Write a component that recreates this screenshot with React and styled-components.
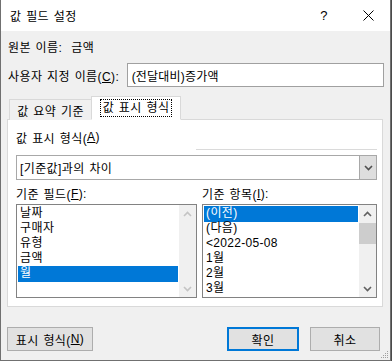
import React from 'react';
import styled, { createGlobalStyle } from 'styled-components';

const Global = createGlobalStyle`
  html, body { margin: 0; padding: 0; background: #4a4a4a; }
  body {
    font-family: "Liberation Sans", "Noto Sans CJK KR", sans-serif;
    font-size: 12px;
    letter-spacing: 0.4px;
    word-spacing: 1px;
    color: #000;
  }
  * { box-sizing: border-box; }
`;

const Window = styled.div`
  position: relative;
  width: 391px;
  height: 361px;
  background: #f0f0f0;
  border-left: 1px solid #707070;
  border-right: 1px solid #707070;
  border-bottom: 1px solid #707070;
  display: flex;
  flex-direction: column;
`;

const TitleBar = styled.div`
  height: 31px;
  background: #fff;
  display: flex;
  align-items: center;
  padding-left: 9px;
`;

const TitleText = styled.div`
  flex: 1;
`;

const TitleButton = styled.div`
  width: 44px;
  height: 31px;
  display: flex;
  align-items: center;
  justify-content: center;
  font-size: 13px;
`;

const Body = styled.div`
  flex: 1;
  padding: 0 6px;
  display: flex;
  flex-direction: column;
`;

const InfoRow = styled.div`
  height: 30px;
  display: flex;
  align-items: center;
  padding-left: 1px;
`;

const InfoValue = styled.span`
  margin-left: 9px;
`;

const NameRow = styled.div`
  margin-top: 2px;
  display: flex;
  align-items: center;
  padding-left: 1px;
`;

const NameLabel = styled.label`
  width: 119px;
`;

const TextInput = styled.div`
  width: 258px;
  height: 24px;
  background: #fff;
  border: 1px solid #a0a0a0;
  display: flex;
  align-items: center;
  padding-left: 4px;
  letter-spacing: 0.2px;
`;

const Mn = styled.span`
  text-decoration: underline;
  text-underline-offset: 1px;
`;

const TabStrip = styled.div`
  margin-top: 9px;
  height: 24px;
  display: flex;
  align-items: flex-end;
  padding-left: 2px;
  position: relative;
  z-index: 1;
`;

const Tab = styled.div`
  height: ${p => (p.$active ? '24px' : '21px')};
  width: ${p => p.$w}px;
  background: ${p => (p.$active ? '#fff' : '#f0f0f0')};
  border: 1px solid #d9d9d9;
  border-bottom: ${p => (p.$active ? '1px solid #fff' : 'none')};
  margin-left: ${p => (p.$active ? '-1px' : '0')};
  display: flex;
  align-items: center;
  justify-content: center;
  padding-top: ${p => (p.$active ? '0' : '1px')};
`;

const FocusBox = styled.span`
  border: 1px dotted #000;
  padding: 0 2px;
  line-height: 16px;
`;

const Panel = styled.div`
  margin-top: -1px;
  width: 376px;
  height: 188px;
  background: #fff;
  border: 1px solid #d9d9d9;
  padding: 0 5px 0 8px;
  display: flex;
  flex-direction: column;
`;

const SectionHead = styled.div`
  height: 30px;
  display: flex;
  align-items: center;
  position: relative;
  padding-top: 4px;
`;

const Rule = styled.div`
  position: absolute;
  left: 180px;
  right: 0;
  bottom: 0;
  height: 1px;
  background: #dadada;
`;

const Select = styled.div`
  margin-top: 5px;
  width: 361px;
  height: 25px;
  display: flex;
  border: 1px solid #a8a8a8;
  background: #fff;
`;

const SelectValue = styled.div`
  flex: 1;
  display: flex;
  align-items: center;
  padding-left: 3px;
`;

const SelectArrow = styled.div`
  width: 17px;
  background: #dedede;
  border-left: 1px solid #a8a8a8;
  display: flex;
  align-items: center;
  justify-content: center;
`;

const ListArea = styled.div`
  margin-top: 3px;
  display: grid;
  grid-template-columns: 181px 175px;
  column-gap: 5px;
`;

const ListCol = styled.div`
  display: flex;
  flex-direction: column;
`;

const ListLabel = styled.div`
  height: 21px;
  display: flex;
  align-items: center;
`;

const ListBox = styled.div`
  height: 94px;
  border: 1px solid #828282;
  background: #fff;
  display: flex;
  overflow: hidden;
`;

const Items = styled.div`
  flex: 1;
  padding: 1px 1px 0 1px;
`;

const Item = styled.div`
  height: ${p => (p.$sel ? '16px' : '15px')};
  margin-bottom: ${p => (p.$sel ? '-1px' : '0')};
  line-height: 15px;
  padding-left: 2px;
  white-space: nowrap;
  background: ${p => (p.$sel ? '#0078d7' : 'transparent')};
  color: ${p => (p.$sel ? '#fff' : '#000')};
  letter-spacing: ${p => (p.$latin ? '0.3px' : '0.4px')};
`;

const ScrollBar = styled.div`
  width: 17px;
  background: #f0f0f0;
  display: flex;
  flex-direction: column;
  align-items: stretch;
`;

const ScrollBtn = styled.div`
  height: 17px;
  display: flex;
  align-items: center;
  justify-content: center;
`;

const ScrollTrack = styled.div`
  flex: 1;
  padding: 1px 0;
`;

const Thumb = styled.div`
  height: 21px;
  background: #cdcdcd;
`;

const ButtonRow = styled.div`
  margin-top: 20px;
  display: flex;
  align-items: center;
`;

const Button = styled.div`
  height: 24px;
  width: ${p => p.$w}px;
  margin-left: ${p => p.$ml || 0}px;
  background: #e1e1e1;
  border: ${p => (p.$default ? '2px solid #0078d7' : '1px solid #adadad')};
  display: flex;
  align-items: center;
  justify-content: center;
`;

const Grip = styled.svg`
  position: absolute;
  right: 1px;
  bottom: 1px;
`;

const Chevron = ({ up, color = '#606060' }) => (
  <svg width="9" height="6" viewBox="0 0 9 6">
    <path
      d={up ? 'M1 5 L4.5 1.5 L8 5' : 'M1 1 L4.5 4.5 L8 1'}
      fill="none"
      stroke={color}
      strokeWidth="1.6"
    />
  </svg>
);

const List = ({ items, sel, disabled, thumb }) => (
  <ListBox>
    <Items>
      {items.map((t, i) => (
        <Item key={t} $sel={i === sel} $latin={/^[<0-9]/.test(t)}>{t}</Item>
      ))}
    </Items>
    <ScrollBar>
      <ScrollBtn><Chevron up color={disabled ? '#c4c4c4' : '#606060'} /></ScrollBtn>
      <ScrollTrack>{thumb && <Thumb />}</ScrollTrack>
      <ScrollBtn><Chevron color={disabled ? '#c4c4c4' : '#606060'} /></ScrollBtn>
    </ScrollBar>
  </ListBox>
);

export default function App() {
  return (
    <>
      <Global />
      <Window>
        <TitleBar>
          <TitleText>값 필드 설정</TitleText>
          <TitleButton>?</TitleButton>
          <TitleButton>
            <svg width="11" height="11" viewBox="0 0 11 11">
              <path d="M0.5 0.5 L10.5 10.5 M10.5 0.5 L0.5 10.5" stroke="#000" strokeWidth="1" />
            </svg>
          </TitleButton>
        </TitleBar>
        <Body>
          <InfoRow>원본 이름:<InfoValue>금액</InfoValue></InfoRow>
          <NameRow>
            <NameLabel>사용자 지정 이름(<Mn>C</Mn>):</NameLabel>
            <TextInput>(전달대비)증가액</TextInput>
          </NameRow>
          <TabStrip>
            <Tab $w={83}>값 요약 기준</Tab>
            <Tab $w={90} $active><FocusBox>값 표시 형식</FocusBox></Tab>
          </TabStrip>
          <Panel>
            <SectionHead>
              값 표시 형식(<Mn>A</Mn>)
              <Rule />
            </SectionHead>
            <Select>
              <SelectValue>[기준값]과의 차이</SelectValue>
              <SelectArrow><Chevron color="#505050" /></SelectArrow>
            </Select>
            <ListArea>
              <ListCol>
                <ListLabel>기준 필드(<Mn>F</Mn>):</ListLabel>
                <List items={['날짜', '구매자', '유형', '금액', '월']} sel={4} disabled />
              </ListCol>
              <ListCol>
                <ListLabel>기준 항목(<Mn>I</Mn>):</ListLabel>
                <List
                  items={['(이전)', '(다음)', '<2022-05-08', '1월', '2월', '3월']}
                  sel={0}
                  thumb
                />
              </ListCol>
            </ListArea>
          </Panel>
          <ButtonRow>
            <Button $w={86}>표시 형식(<Mn>N</Mn>)</Button>
            <Button $w={72} $ml={134} $default>확인</Button>
            <Button $w={70} $ml={11}>취소</Button>
          </ButtonRow>
        </Body>
        <Grip width="10" height="10" viewBox="0 0 10 10">
          <g fill="#a0a0a0">
            <rect x="8" y="2" width="1" height="1" />
            <rect x="6" y="4" width="1" height="1" />
            <rect x="8" y="4" width="1" height="1" />
            <rect x="4" y="6" width="1" height="1" />
            <rect x="6" y="6" width="1" height="1" />
            <rect x="8" y="6" width="1" height="1" />
            <rect x="2" y="8" width="1" height="1" />
            <rect x="4" y="8" width="1" height="1" />
            <rect x="6" y="8" width="1" height="1" />
            <rect x="8" y="8" width="1" height="1" />
          </g>
        </Grip>
      </Window>
    </>
  );
}
